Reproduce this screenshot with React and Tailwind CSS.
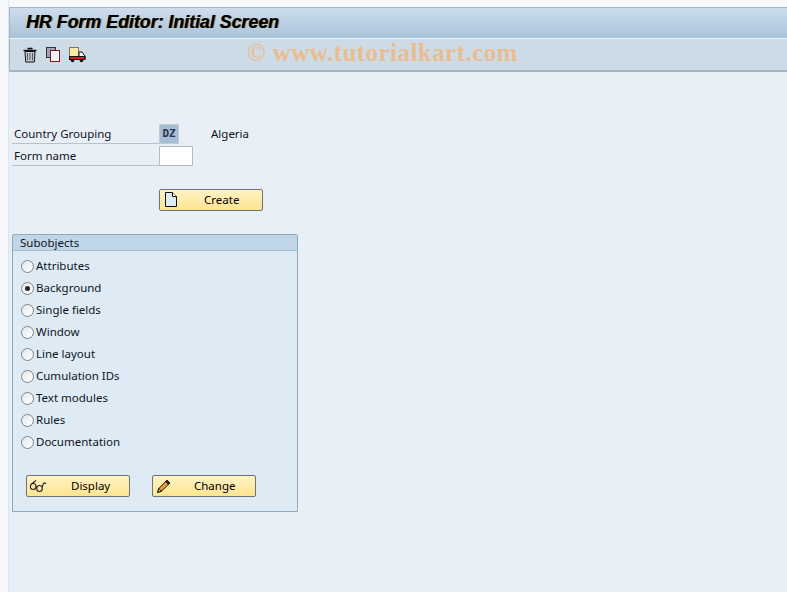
import React from 'react'

const font = "font-['Noto_Sans',sans-serif]"

const subobjects = [
  'Attributes',
  'Background',
  'Single fields',
  'Window',
  'Line layout',
  'Cumulation IDs',
  'Text modules',
  'Rules',
  'Documentation',
]

const TrashIcon = () => (
  <svg width="14" height="16" viewBox="0 0 14 16">
    <path d="M4.500 1.500h5M.5 3.500h13" stroke="#111" strokeWidth="1.400" fill="none" />
    <path d="M2 4.500h10l-.7 10.500H2.700z" fill="#c4c8cf" stroke="#111" />
    <path d="M4.500 6v7M7 6v7M9.500 6v7" stroke="#55585e" />
  </svg>
)

const CopyIcon = () => (
  <svg width="14" height="15" viewBox="0 0 14 15">
    <rect x="0.500" y="0.500" width="9" height="10" fill="#9ea6b5" stroke="#333" />
    <rect x="4.500" y="3.500" width="9" height="11" fill="#eef2fb" stroke="#8c1018" />
  </svg>
)

const TruckIcon = () => (
  <svg width="17" height="16" viewBox="0 0 17 16">
    <rect x="0.500" y="0.500" width="9" height="9" fill="#f8eaa0" stroke="#777" />
    <path d="M10 5h3l3 4v3H10z" fill="#f4f4f4" stroke="#111" />
    <rect x="0.500" y="9.500" width="15.500" height="3" fill="#e8141c" stroke="#111" />
    <circle cx="3.500" cy="13.500" r="1.800" fill="#111" />
    <circle cx="12.500" cy="13.500" r="1.800" fill="#111" />
  </svg>
)

const PageIcon = () => (
  <svg width="14" height="16" viewBox="0 0 14 16">
    <path d="M1.500 .5h7l4 4v10h-11z" fill="#dcebf6" stroke="#111" />
    <path d="M8.500 .5v4h4" fill="#fff" stroke="#111" />
  </svg>
)

const GlassesIcon = () => (
  <svg width="18" height="14" viewBox="0 0 18 14">
    <ellipse cx="4.200" cy="7.500" rx="2.800" ry="3" fill="none" stroke="#222" strokeWidth="1.100" />
    <ellipse cx="10.500" cy="9.500" rx="2.800" ry="3" fill="none" stroke="#222" strokeWidth="1.100" />
    <path d="M2.500 5 7 1.500M7 8l1 .5M13 8l1.500-3.500c.7-1 1.800-.8 2.500.5" fill="none" stroke="#222" strokeWidth="1.100" />
  </svg>
)

const PencilIcon = () => (
  <svg width="14" height="14" viewBox="0 0 14 14">
    <path d="M.7 13.300 1.800 9.500 10 1.300l2.700 2.700-8.200 8.200z" fill="#f0a030" stroke="#111" />
    <path d="M10 1.300l2.700 2.700-1.300 1.300-2.700-2.700z" fill="#333" stroke="#111" />
    <path d="M.7 13.300 1.800 9.500l2.700 2.700z" fill="#f7e0b8" stroke="#111" />
  </svg>
)

const SapButton = ({ icon, label, textClass }) => (
  <button className="flex h-[22px] w-[104px] items-center rounded-[2px] border border-[#6f7378] bg-gradient-to-b from-[#fff3c4] to-[#fde48f] pl-[1px] text-[11.5px] text-black">
    <span className="flex w-[20px] shrink-0 justify-center">{icon}</span>
    <span className={textClass}>{label}</span>
  </button>
)

const Radio = ({ label, checked }) => (
  <div className="flex h-[22px] items-center">
    <span className="flex h-[13px] w-[13px] items-center justify-center rounded-full border border-[#7d858d] bg-gradient-to-br from-[#e4e7ea] to-white">
      {checked && <span className="h-[5px] w-[5px] rounded-full bg-[#23272e]"></span>}
    </span>
    <span className="ml-[2px] text-[11.5px] text-[#10131a]">{label}</span>
  </div>
)

const App = () => {
  return (
    <div className={`${font} flex h-[592px] w-[787px] overflow-hidden bg-[#f6f8fb]`}>
      <div className="w-[9px] shrink-0 border-r border-[#dfe5ec]"></div>

      <div className="flex min-w-0 flex-1 flex-col pt-[7px]">
        <div className="flex h-[31px] items-center border-t border-l border-[#a5b3c2] bg-gradient-to-b from-[#cddded] to-[#a9c3da] pb-[2px] pl-[16px]">
          <h1 className="font-['Liberation_Sans',sans-serif] text-[17.8px] font-bold italic text-black [text-shadow:1px_0_0_#7a5c20]">
            HR Form Editor: Initial Screen
          </h1>
        </div>

        <div className="flex h-[34px] items-center border-t border-b-2 border-l border-t-[#eef3f8] border-b-[#a7b3c0] border-l-[#a5b3c2] bg-[#cddbe7] pl-[13px]">
          <div className="flex items-center gap-[9px]">
            <TrashIcon />
            <CopyIcon />
            <TruckIcon />
          </div>
          <span className="-mt-[3px] ml-[161px] font-['Liberation_Serif',serif] text-[25px] font-bold tracking-[0.45px] whitespace-nowrap text-[#e9bd90]">
            © www.tutorialkart.com
          </span>
        </div>

        <div className="flex flex-1 flex-col bg-[#e8eff7] pl-[3px] text-[11.5px] text-[#10131a]">
          <div className="mt-[50px] flex h-[22px] items-end">
            <span className="flex h-[22px] w-[147px] items-center border-b border-[#b7c2cc] pt-[2px] pl-[2px]">Country Grouping</span>
            <span className="flex h-[20px] w-[20px] items-center justify-center border border-[#c3ccd4] bg-[#a6bdd6] font-['DejaVu_Sans_Mono',monospace] text-[11px] font-bold text-[#2a3648]">
              DZ
            </span>
            <span className="mb-[1px] ml-[32px] self-center pt-[2px]">Algeria</span>
          </div>
          <div className="flex h-[22px] items-end">
            <span className="flex h-[22px] w-[147px] items-center border-b border-[#b7c2cc] pt-[2px] pl-[2px]">Form name</span>
            <span className="h-[20px] w-[34px] border border-[#b5bcc4] bg-white"></span>
          </div>

          <div className="mt-[23px] ml-[147px]">
            <SapButton icon={<PageIcon />} label="Create" textClass="ml-[23px]" />
          </div>

          <section className="mt-[23px] h-[278px] w-[286px] rounded-t-[2px] border border-[#8fa9c0] bg-[#deebf5]">
            <div className="flex h-[16px] items-center border-b border-[#a9c0d4] bg-[#c0d6e8] pl-[7px]">Subobjects</div>
            <div className="mt-[4px] pl-[8px]">
              {subobjects.map((name) => (
                <Radio key={name} label={name} checked={name === 'Background'} />
              ))}
            </div>
            <div className="mt-[22px] ml-[13px] flex gap-[22px]">
              <SapButton icon={<GlassesIcon />} label="Display" textClass="ml-[23px]" />
              <SapButton icon={<PencilIcon />} label="Change" textClass="ml-[20px]" />
            </div>
          </section>
        </div>
      </div>
    </div>
  )
}

export default App
